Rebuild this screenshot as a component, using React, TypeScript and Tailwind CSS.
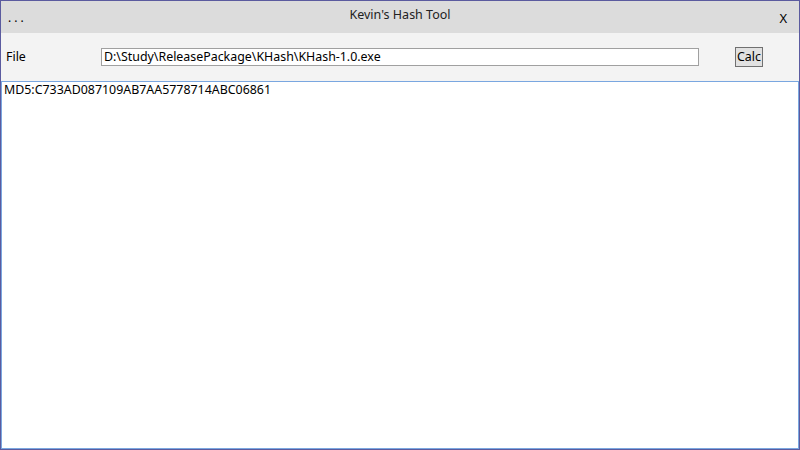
export default function App() {
    return (
        <div
            className="w-[800px] h-[450px] border border-[#5b5b9f] flex flex-col bg-[#f3f3f3] text-[12.4px] text-black overflow-hidden"
            style={{ fontFamily: '"Noto Sans", "Noto Sans CJK SC", sans-serif' }}
        >
            {/* Title bar */}
            <div className="h-[32px] bg-[#dcdcdc] flex items-center justify-between px-[7px] relative">
                <span className="tracking-[3px] text-[12px] leading-none mt-[2px]">...</span>
                <span className="absolute left-0 right-0 text-center text-[12.5px] top-[5px] pointer-events-none text-[#222]">
                    Kevin's Hash Tool
                </span>
                <span className="text-[13px] mr-[5px] mt-[3px]">X</span>
            </div>

            {/* File row */}
            <div className="h-[48px] flex items-center pl-[5px] pr-[36px]">
                <span className="w-[95px]">File</span>
                <input
                    readOnly
                    value="D:\Study\ReleasePackage\KHash\KHash-1.0.exe"
                    className="w-[598px] h-[18px] border border-[#a0a0a0] bg-white px-[2px] text-[12.4px] outline-none"
                    style={{ fontFamily: '"Noto Sans", sans-serif' }}
                />
                <button className="ml-auto h-[20px] w-[28px] border border-[#707070] bg-[#e1e1e1] text-[12.4px] leading-none">
                    Calc
                </button>
            </div>

            {/* Output */}
            <div className="flex-1 bg-white border border-[#7aa7e0] px-[2px] leading-[16px]">
                MD5:C733AD087109AB7AA5778714ABC06861
            </div>
        </div>
    );
}
